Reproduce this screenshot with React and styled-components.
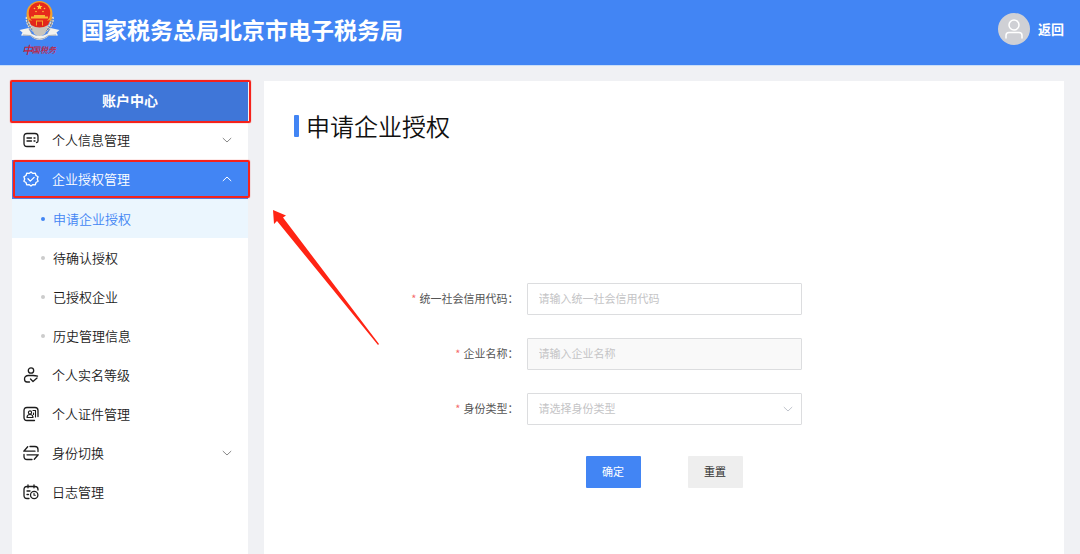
import React from "react";
import styled, { createGlobalStyle } from "styled-components";

const GlobalStyle = createGlobalStyle`
  * { box-sizing: border-box; }
  body {
    margin: 0;
    background: #f0f1f4;
    color: #222;
    font-family: "Noto Sans CJK SC", sans-serif;
    font-size: 13px;
  }
  button, input, select { font-family: inherit; }
`;

const Page = styled.div`
  position: relative;
  display: flex;
  flex-direction: column;
  min-height: 100vh;
`;

const TopBar = styled.header`
  display: flex;
  align-items: center;
  height: 66px;
  padding: 0 16px 8px 19px;
  background: #4285f4;
  border-bottom: 1px solid #c9def8;
  color: #fff;
`;

const SiteTitle = styled.h1`
  flex: 1;
  margin: 0 0 0 20px;
  font-size: 23px;
  line-height: 32px;
  font-weight: 700;
`;

const BackLink = styled.a`
  display: flex;
  align-items: center;
  gap: 8px;
  color: #fff;
  font-weight: 700;
  text-decoration: none;
`;

const Body = styled.div`
  flex: 1;
  display: flex;
  gap: 16px;
  padding: 15px 16px 0 12px;
`;

const Sidebar = styled.nav`
  width: 236px;
  flex-shrink: 0;
  background: #fff;
`;

const SidebarTitle = styled.h2`
  margin: 0;
  height: 40px;
  line-height: 38px;
  background: #3f76d8;
  color: #fff;
  font-size: 14px;
  font-weight: 700;
  text-align: center;
`;

const Menu = styled.ul`
  margin: 0;
  padding: 0;
  list-style: none;
`;

const SubMenu = styled(Menu)`
  padding-bottom: 1px;
`;

const MenuButton = styled.button`
  display: flex;
  align-items: center;
  width: 100%;
  height: 39px;
  padding: 0 16px 2px 11px;
  border: 0;
  background: ${(p) => (p.$active ? "#4285f4" : "transparent")};
  color: ${(p) => (p.$active ? "#fff" : "#1c1c1c")};
  font-size: 13px;
  font-weight: 350;
  text-align: left;
  cursor: pointer;
`;

const MenuLabel = styled.span`
  flex: 1;
  margin-left: 13px;
`;

const SubLink = styled.a`
  display: flex;
  align-items: center;
  gap: 8px;
  height: 39px;
  padding-left: 29px;
  background: ${(p) => (p.$active ? "#ebf6fe" : "transparent")};
  color: ${(p) => (p.$active ? "#4285f4" : "#1c1c1c")};
  font-weight: 350;
  text-decoration: none;

  &::before {
    content: "";
    width: 4px;
    height: 4px;
    border-radius: 50%;
    background: ${(p) => (p.$active ? "#4285f4" : "#ccc")};
  }
`;

const Content = styled.main`
  flex: 1;
  padding: 29px 30px 0;
  background: #fff;
`;

const PageTitle = styled.h2`
  display: flex;
  align-items: center;
  gap: 7px;
  margin: 0 0 141px;
  color: #111;
  font-size: 24px;
  line-height: 32px;
  font-weight: 350;

  &::before {
    content: "";
    width: 5px;
    height: 22px;
    border-radius: 1px;
    background: #4285f4;
  }
`;

const Form = styled.form`
  display: flex;
  flex-direction: column;
  gap: 23px;
`;

const Field = styled.div`
  display: grid;
  grid-template-columns: 1fr 275px 1fr;
  align-items: center;
`;

const FieldLabel = styled.label`
  padding: 0 8px 2px 0;
  color: #555;
  font-size: 11px;
  text-align: right;

  &::before {
    content: "*";
    margin-right: 3px;
    color: #f56c6c;
  }
`;

const TextInput = styled.input`
  width: 100%;
  height: 32px;
  padding: 0 11px 2px;
  border: 1px solid #dcdddf;
  border-radius: 1px;
  background: #fff;
  font-size: 11px;

  &::placeholder { color: #c4c4c6; }
  &:disabled { background: #f9f9f9; }
`;

const SelectBox = styled.div`
  display: grid;
  align-items: center;

  > * { grid-area: 1 / 1; }
  > svg { justify-self: end; margin-right: 9px; pointer-events: none; }
`;

const Select = styled.select`
  appearance: none;
  width: 100%;
  height: 32px;
  padding: 0 11px 2px;
  border: 1px solid #dcdddf;
  border-radius: 1px;
  background: #fff;
  color: #c4c4c6;
  font-size: 11px;
`;

const Actions = styled.div`
  display: flex;
  justify-content: center;
  gap: 47px;
  margin-top: 8px;
`;

const ActionButton = styled.button`
  width: 55px;
  height: 32px;
  padding: 0 0 2px;
  border: 0;
  border-radius: 1px;
  background: ${(p) => (p.$primary ? "#4285f4" : "#eee")};
  color: ${(p) => (p.$primary ? "#fff" : "#333")};
  font-size: 11px;
  cursor: pointer;
`;

const Highlight = styled.div`
  position: absolute;
  top: ${(p) => p.$top}px;
  left: ${(p) => p.$left}px;
  width: ${(p) => p.$width}px;
  height: ${(p) => p.$height}px;
  border: 2px solid #f5221b;
  border-radius: 2px;
  box-shadow: 0 0 1px #f5221b;
  pointer-events: none;
`;

const Arrow = styled.svg`
  position: absolute;
  top: 208px;
  left: 270px;
  pointer-events: none;
`;

const Emblem = () => (
  <svg width="42" height="58" viewBox="0 0 42 58" aria-hidden="true">
    <g fill="none" stroke="#e3dfd3" strokeWidth="3.500" strokeDasharray="2 .7">
      <path d="M8.500 17q-1 9 9 15" />
      <path d="M33 17q1 9-9 15" />
    </g>
    <path d="M8.500 18q-1 9 9 15M33 18q1 9-9 15" fill="none" stroke="#77726b" strokeWidth=".8" />
    <path d="M12 25h17l-3 9-5.500 3-5.500-3z" fill="#c9c5bd" />
    <circle cx="20.500" cy="14" r="13" fill="#f2a02c" />
    <circle cx="20.500" cy="13" r="10.800" fill="#e72a1c" />
    <path d="M20.500 4l.9 1.900 2.100.2-1.600 1.400.5 2-1.900-1-1.900 1 .5-2-1.600-1.400 2.100-.2z" fill="#ffd23c" />
    <circle cx="15.500" cy="8.500" r=".8" fill="#ffc23c" />
    <circle cx="25.500" cy="8.500" r=".8" fill="#ffc23c" />
    <circle cx="17" cy="11.500" r=".8" fill="#ffc23c" />
    <circle cx="24" cy="11.500" r=".8" fill="#ffc23c" />
    <path d="M12 18.500h17v-2h-3v-1.500h-11v1.500h-3z" fill="#f7b733" />
    <path d="M10 20q10.500 4 21 0l-2 5q-8.500 5-17 0z" fill="#e3271b" />
    <path d="M17 20.500h7v5h-7z" fill="#f4a62b" />
    <path d="M18 21.500h5v5h-5z" fill="#d9241b" />
    <path d="M.5 30l9-2 3.500 6q7.500 4 15 0l3.500-6 9 2-3 2.500 1.500 3-9.500.5q-9 8-18 0L2 35.500l1.500-3z" fill="#f3f1ed" />
    <path d="M4 35l7.500.5q9 7.500 18 0L37 35M13 34l-3-5M28 34l3-5" fill="none" stroke="#8f99a8" strokeWidth=".8" />
    <g fill="#c02440" fontFamily="Noto Sans CJK SC, sans-serif" fontWeight="500" fontStyle="italic">
      <text x="3" y="54" fontSize="11">中</text>
      <text x="13" y="53" fontSize="8">国税务</text>
    </g>
  </svg>
);

const Avatar = () => (
  <svg width="32" height="32" viewBox="0 0 32 32" aria-hidden="true">
    <circle cx="16" cy="16" r="16" fill="#cfd0d5" />
    <g fill="none" stroke="#fff" strokeWidth="1.500" strokeLinecap="round">
      <circle cx="16" cy="12" r="5" />
      <path d="M8 25v-2.500q0-3 3-3h10q3 0 3 3V25" />
    </g>
  </svg>
);

const Chevron = ({ up, color = "#888" }) => (
  <svg width="10" height="10" viewBox="0 0 10 10" fill="none" stroke={color} aria-hidden="true">
    <path d={up ? "M.8 7L5 3l4.200 4" : "M.8 3L5 7l4.200-4"} />
  </svg>
);

const iconPaths = {
  profile: (
    <>
      <path d="M11.500 14.500H4q-3 0-3-3v-7q0-3 3-3h8q3 0 3 3V9q0 1.500-1.500 1.500" />
      <path d="M4 6h4.500M4 9h4.500M11 6h1M11 9h1" />
    </>
  ),
  badge: (
    <path d="M8 .9l1.900 1.500 2.400-.2.700 2.300 2.100 1.200L14.300 8l.8 2.300-2.100 1.200-.7 2.300-2.400-.2L8 15.100l-1.900-1.500-2.400.2-.7-2.300L.9 10.300 1.700 8 .9 5.700 3 4.500l.7-2.300 2.400.2zM5 7.800l2.300 2.300 3.800-3.700" />
  ),
  person: (
    <>
      <circle cx="8" cy="3.500" r="2.700" />
      <path d="M14.500 9.200Q12.500 8.500 10 8.500H5.500Q1.500 8.500 1.500 12q0 3 2.500 3h2.500M7.500 12l2.500 2.500 4-3.500" />
    </>
  ),
  idCard: (
    <>
      <path d="M11.500 14.500H4q-3 0-3-3v-7q0-3 3-3h8q3 0 3 3v6" />
      <g strokeWidth="1.100">
        <path d="M10 4.500h2.500V11M10.500 7v1.500" />
        <circle cx="7" cy="6.500" r="1.600" />
        <path d="M4 11.500q0-3 3-3t3 3z" />
      </g>
    </>
  ),
  swap: (
    <>
      <path d="M4.700 1.800L.8 6.200H12M7 1.500h5q3 0 3 3v2" />
      <path d="M11.300 14.200l3.900-4.400H4M9 14.500H4q-3 0-3-3v-2" />
    </>
  ),
  log: (
    <>
      <path d="M6 14.500H4q-3 0-3-3v-6q0-3 3-3h8q3 0 3 3V6M5 .8v3M11 .8v3M4 7h3M4 10.500h1.500" />
      <circle cx="11.200" cy="11" r="3.700" />
      <path d="M11 9.400V11.300h1.300" strokeWidth="1.100" />
    </>
  ),
};

const MenuIcon = ({ name }) => (
  <svg width="16" height="16" viewBox="0 0 16 16" fill="none" stroke="currentColor" strokeWidth="1.300" strokeLinecap="round" strokeLinejoin="round" aria-hidden="true">
    {iconPaths[name]}
  </svg>
);

const menu = [
  { icon: "profile", label: "个人信息管理", expandable: true },
  {
    icon: "badge",
    label: "企业授权管理",
    expandable: true,
    active: true,
    children: ["申请企业授权", "待确认授权", "已授权企业", "历史管理信息"],
  },
  { icon: "person", label: "个人实名等级" },
  { icon: "idCard", label: "个人证件管理" },
  { icon: "swap", label: "身份切换", expandable: true },
  { icon: "log", label: "日志管理" },
];

export default function App() {
  return (
    <Page>
      <GlobalStyle />
      <TopBar>
        <Emblem />
        <SiteTitle>国家税务总局北京市电子税务局</SiteTitle>
        <BackLink href="#back">
          <Avatar />
          返回
        </BackLink>
      </TopBar>
      <Body>
        <Sidebar>
          <SidebarTitle>账户中心</SidebarTitle>
          <Menu>
            {menu.map((item) => (
              <li key={item.label}>
                <MenuButton type="button" $active={item.active}>
                  <MenuIcon name={item.icon} />
                  <MenuLabel>{item.label}</MenuLabel>
                  {item.expandable && <Chevron up={item.active} color={item.active ? "#fff" : "#888"} />}
                </MenuButton>
                {item.children && (
                  <SubMenu>
                    {item.children.map((label, i) => (
                      <li key={label}>
                        <SubLink href="#page" $active={i === 0}>{label}</SubLink>
                      </li>
                    ))}
                  </SubMenu>
                )}
              </li>
            ))}
          </Menu>
        </Sidebar>
        <Content>
          <PageTitle>申请企业授权</PageTitle>
          <Form>
            <Field>
              <FieldLabel htmlFor="code">统一社会信用代码：</FieldLabel>
              <TextInput id="code" placeholder="请输入统一社会信用代码" />
            </Field>
            <Field>
              <FieldLabel htmlFor="company">企业名称：</FieldLabel>
              <TextInput id="company" placeholder="请输入企业名称" disabled />
            </Field>
            <Field>
              <FieldLabel htmlFor="role">身份类型：</FieldLabel>
              <SelectBox>
                <Select id="role" defaultValue="">
                  <option value="">请选择身份类型</option>
                </Select>
                <Chevron color="#c0c4cc" />
              </SelectBox>
            </Field>
            <Actions>
              <ActionButton type="button" $primary>确定</ActionButton>
              <ActionButton type="reset">重置</ActionButton>
            </Actions>
          </Form>
        </Content>
      </Body>
      <Highlight $top={80} $left={10} $width={241} $height={43} />
      <Highlight $top={160} $left={13} $width={237} $height={38} />
      <Arrow width="112" height="140" viewBox="0 0 112 140" aria-hidden="true">
        <path d="M3 2L16 7.500L13 9.500L109 136L108 137L7 13L4 16Z" fill="#ff2414" />
      </Arrow>
    </Page>
  );
}
